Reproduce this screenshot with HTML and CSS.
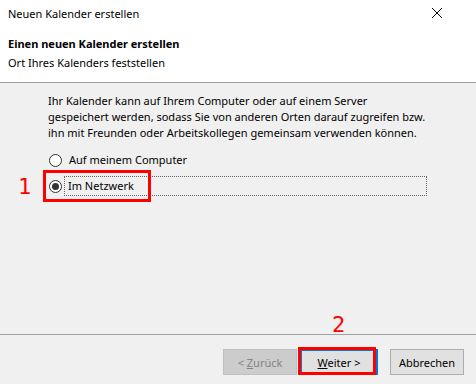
FILE: index.html
```html
<!DOCTYPE html>
<html>
<head>
    <title>Neuen Kalender erstellen</title>
    <link rel="stylesheet" href="styles.css">
</head>
<body>
    <div class="dialog">
        <div class="titlebar">
            <span class="title">Neuen Kalender erstellen</span>
            <svg class="close" width="12" height="12" viewBox="0 0 12 12">
                <path d="M1 1 L11 11 M11 1 L1 11" stroke="#000" stroke-width="1" fill="none"/>
            </svg>
        </div>

        <div class="header">
            <div class="header-title">Einen neuen Kalender erstellen</div>
            <div class="header-sub">Ort Ihres Kalenders feststellen</div>
        </div>

        <div class="content">
            <p class="intro">Ihr Kalender kann auf Ihrem Computer oder auf einem Server<br>
                gespeichert werden, sodass Sie von anderen Orten darauf zugreifen bzw.<br>
                ihn mit Freunden oder Arbeitskollegen gemeinsam verwenden können.</p>

            <div class="radio-row">
                <span class="radio"></span>
                <span class="radio-label">Auf meinem Computer</span>
            </div>
            <div class="radio-row">
                <span class="radio checked"></span>
                <span class="radio-label focused">Im Netzwerk</span>
            </div>
        </div>

        <div class="footer">
            <button class="btn" disabled>&lt; <u>Z</u>urück</button>
            <button class="btn default"><u>W</u>eiter &gt;</button>
            <button class="btn cancel">Abbrechen</button>
        </div>

        <!-- Markierungen -->
        <div class="mark mark-1"></div>
        <div class="mark-num num-1">1</div>
        <div class="mark mark-2"></div>
        <div class="mark-num num-2">2</div>
    </div>
</body>
</html>
```

FILE: styles.css
```css
body {
    margin: 0;
    font-family: "Noto Sans", sans-serif;
    font-size: 11px;
    color: #000;
}
.dialog {
    position: relative;
    width: 476px;
    height: 384px;
    background-color: #f0f0f0;
    overflow: hidden;
}
.titlebar {
    height: 30px;
    background-color: #fff;
    display: flex;
    align-items: center;
    justify-content: space-between;
    padding: 0 33px 4px 8px;
    box-sizing: border-box;
}
.header {
    background-color: #fff;
    height: 53px;
    box-sizing: border-box;
    padding: 5px 0 0 8px;
    border-bottom: 1px solid #a0a0a0;
}
.header-title {
    font-weight: bold;
    line-height: 18px;
}
.header-sub {
    line-height: 18px;
    margin-top: 1px;
}
.content {
    padding: 10px 0 0 48px;
    height: 240px;
    box-sizing: border-box;
}
.intro {
    margin: 0 0 6px 0;
    line-height: 16px;
    white-space: nowrap;
}
.radio-row {
    display: flex;
    align-items: center;
    height: 26px;
}
.radio {
    width: 11px;
    height: 11px;
    border: 1px solid #333;
    border-radius: 50%;
    background-color: #fff;
    margin: 0 3px 0 1px;
    display: flex;
    align-items: center;
    justify-content: center;
}
.radio.checked::after {
    content: "";
    width: 7px;
    height: 7px;
    border-radius: 50%;
    background-color: #333;
}
.radio-label {
    padding: 1px 3px 1px 3px;
    border: 1px dotted transparent;
    line-height: 16px;
}
.radio-label.focused {
    border-color: #646464;
    width: 355px;
    margin-left: -1px;
}
.footer {
    border-top: 1px solid #a0a0a0;
    margin-top: 11px;
    padding: 14px 0 0 223px;
    display: flex;
    gap: 3px;
}
.btn {
    width: 74px;
    height: 26px;
    font-family: "Noto Sans", sans-serif;
    font-size: 11px;
    background-color: #e1e1e1;
    border: 1px solid #adadad;
    color: #000;
    padding: 0;
}
.btn:disabled {
    background-color: #cccccc;
    border-color: #bfbfbf;
    color: #838383;
}
.btn.default {
    border: 2px solid #0078d7;
    width: 78px;
}
.btn.cancel {
    margin-left: 9px;
}
.mark {
    position: absolute;
    border: 3px solid #ff0000;
    box-sizing: border-box;
}
.mark-1 {
    left: 43px;
    top: 170px;
    width: 108px;
    height: 32px;
}
.mark-2 {
    left: 298px;
    top: 347px;
    width: 78px;
    height: 28px;
}
.mark-num {
    position: absolute;
    color: #ff0000;
    font-family: "DejaVu Sans Mono", monospace;
    font-size: 22px;
    line-height: 22px;
}
.num-1 {
    left: 18px;
    top: 176px;
}
.num-2 {
    left: 332px;
    top: 314px;
}
```
